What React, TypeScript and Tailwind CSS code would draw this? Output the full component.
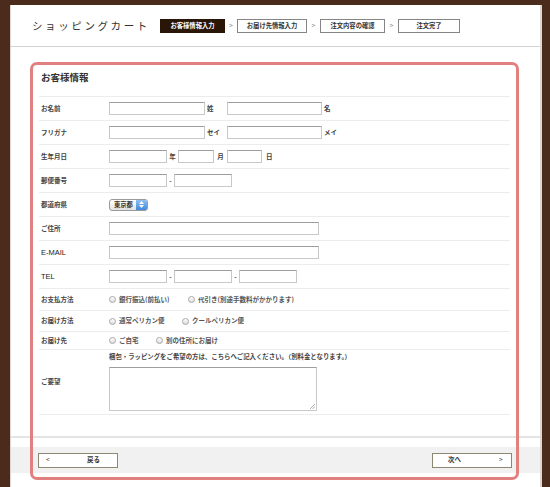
const jp = "font-['Noto_Sans_CJK_JP','Noto_Sans',sans-serif]";

function Field({ w }: { w: number }) {
  return (
    <div
      className="h-[13px] border border-[#c9c9c9] border-t-[#9e9e9e] bg-white"
      style={{ width: w }}
    />
  );
}

function Radio({ label, w }: { label: string; w?: number }) {
  return (
    <div className="flex items-center" style={w ? { width: w } : undefined}>
      <span className="w-[7px] h-[7px] rounded-full border border-[#a8a8a8] bg-gradient-to-b from-white to-[#dcdcdc] mr-[3px] shrink-0" />
      <span className="text-[6.5px] font-bold text-[#555] whitespace-nowrap">{label}</span>
    </div>
  );
}

function Row({ label, h = 24, latin, children }: { label: string; h?: number; latin?: boolean; children?: React.ReactNode }) {
  return (
    <div className="flex items-center border-b border-[#ececec]" style={{ height: h }}>
      <div
        className={
          "w-[70px] pl-[2px] " +
          (latin
            ? "text-[7.5px] text-[#222] font-['Liberation_Sans',sans-serif]"
            : "text-[6.5px] font-bold text-[#444]")
        }
      >
        {label}
      </div>
      <div className="flex items-center">{children}</div>
    </div>
  );
}

function Step({ text, active }: { text: string; active?: boolean }) {
  return (
    <div
      className={
        "h-[14px] flex items-center justify-center text-[6.3px] font-bold " +
        (active ? "bg-[#2a1607] text-white" : "bg-white border border-[#858585] text-[#333]")
      }
    >
      {text}
    </div>
  );
}

export default function App() {
  return (
    <div className={"w-[550px] h-[487px] overflow-hidden bg-[#4b2b1b] pt-[5px] pl-[10px] " + jp}>
      <div className="relative w-[532px] h-[482px] bg-white border-l border-r-2 border-[#dcd7d2] flex flex-col">
        {/* header */}
        <div className="h-[42px] shrink-0 border-b border-[#d2d2d2] flex items-center">
          <div className="ml-[21px] w-[128px] text-[10.5px] tracking-[2.6px] text-[#333]">ショッピングカート</div>
          <div className="flex items-center">
            <div className="w-[65px]"><Step text="お客様情報入力" active /></div>
            <span className="w-[12px] text-center text-[7px] text-[#888]">&gt;</span>
            <div className="w-[70px]"><Step text="お届け先情報入力" /></div>
            <span className="w-[13px] text-center text-[7px] text-[#888]">&gt;</span>
            <div className="w-[65px]"><Step text="注文内容の確認" /></div>
            <span className="w-[13px] text-center text-[7px] text-[#888]">&gt;</span>
            <div className="w-[62px]"><Step text="注文完了" /></div>
          </div>
        </div>

        {/* form */}
        <div className="ml-[28px] w-[471px] pt-[23px]">
          <div className="h-[14px] leading-[14px] pl-[2px] text-[9.5px] font-bold text-[#333] mb-[12px]">お客様情報</div>
          <div className="border-t border-[#ececec]">
            <Row label="お名前">
              <Field w={96} />
              <span className="w-[22px] pl-[2px] text-[6.5px] font-bold text-[#444]">姓</span>
              <Field w={95} />
              <span className="pl-[2px] text-[6.5px] font-bold text-[#444]">名</span>
            </Row>
            <Row label="フリガナ">
              <Field w={96} />
              <span className="w-[22px] pl-[2px] text-[6.5px] font-bold text-[#444]">セイ</span>
              <Field w={95} />
              <span className="pl-[2px] text-[6.5px] font-bold text-[#444]">メイ</span>
            </Row>
            <Row label="生年月日">
              <Field w={58} />
              <span className="w-[11px] text-center text-[6.5px] font-bold text-[#444]">年</span>
              <Field w={36} />
              <span className="w-[13px] text-center text-[6.5px] font-bold text-[#444]">月</span>
              <Field w={35} />
              <span className="pl-[4px] text-[6.5px] font-bold text-[#444]">日</span>
            </Row>
            <Row label="郵便番号">
              <Field w={58} />
              <span className="w-[7px] text-center text-[6.5px] font-bold text-[#444]">-</span>
              <Field w={58} />
            </Row>
            <Row label="都道府県">
              <div className="h-[12px] w-[39px] flex rounded-[3px] border border-[#9a9a9a] bg-gradient-to-b from-white to-[#e2e2e2] overflow-hidden">
                <span className="flex-1 pl-[4px] text-[6.3px] font-bold leading-[10px] text-[#333]">東京都</span>
                <span className="w-[11px] bg-gradient-to-b from-[#8fc0f2] to-[#3f86dc] flex flex-col items-center justify-center gap-[1px]">
                  <svg width="5" height="3" viewBox="0 0 5 3"><path d="M0 3 L2.5 0 L5 3 Z" fill="#fff" /></svg>
                  <svg width="5" height="3" viewBox="0 0 5 3"><path d="M0 0 L2.5 3 L5 0 Z" fill="#fff" /></svg>
                </span>
              </div>
            </Row>
            <Row label="ご住所">
              <Field w={210} />
            </Row>
            <Row label="E-MAIL" latin>
              <Field w={210} />
            </Row>
            <Row label="TEL" latin>
              <Field w={58} />
              <span className="w-[7px] text-center text-[6.5px] font-bold text-[#444]">-</span>
              <Field w={58} />
              <span className="w-[7px] text-center text-[6.5px] font-bold text-[#444]">-</span>
              <Field w={58} />
            </Row>
            <Row label="お支払方法" h={22}>
              <Radio label="銀行振込(前払い)" w={79} />
              <Radio label="代引き(別途手数料がかかります)" />
            </Row>
            <Row label="お届け方法" h={21}>
              <Radio label="通常ペリカン便" w={73} />
              <Radio label="クールペリカン便" />
            </Row>
            <Row label="お届け先" h={18}>
              <Radio label="ご自宅" w={47} />
              <Radio label="別の住所にお届け" />
            </Row>
            <div className="h-[65px] flex items-center border-b border-[#ececec]">
              <div className="w-[70px] pl-[2px] text-[6.5px] font-bold text-[#444]">ご要望</div>
              <div className="flex flex-col">
                <span className="text-[6.4px] font-bold text-[#444] leading-[8px] mb-[6px] whitespace-nowrap">
                  梱包・ラッピングをご希望の方は、こちらへご記入ください。（別料金となります。）
                </span>
                <div className="relative w-[208px] h-[44px] border border-[#c9c9c9] border-t-[#9e9e9e] bg-white">
                  <svg className="absolute right-[1px] bottom-[1px]" width="6" height="6" viewBox="0 0 6 6">
                    <path d="M6 1 L1 6 M6 3.5 L3.5 6" stroke="#999" strokeWidth="0.8" />
                  </svg>
                </div>
              </div>
            </div>
          </div>
        </div>

        {/* footer */}
        <div className="mt-[21px] border-t-2 border-[#e4e4e4] pt-[9px]">
          <div className="h-[26px] bg-[#f1f1f1] flex items-center justify-between pl-[27px] pr-[28px]">
            <div className="w-[80px] h-[15px] border-[1.5px] border-[#8c8672] bg-white flex items-center text-[6.5px] text-[#333]">
              <span className="pl-[7px] w-[48px]">&lt;</span>
              <span className="font-bold">戻る</span>
            </div>
            <div className="w-[80px] h-[15px] border-[1.5px] border-[#8c8672] bg-white flex items-center text-[6.5px] text-[#333]">
              <span className="pl-[15px] w-[66px] font-bold">次へ</span>
              <span>&gt;</span>
            </div>
          </div>
        </div>

        {/* highlight */}
        <div className="absolute left-[19px] top-[57px] w-[489px] h-[418px] border-[3px] border-[#e1807f] rounded-[7px] pointer-events-none" />
      </div>
    </div>
  );
}
